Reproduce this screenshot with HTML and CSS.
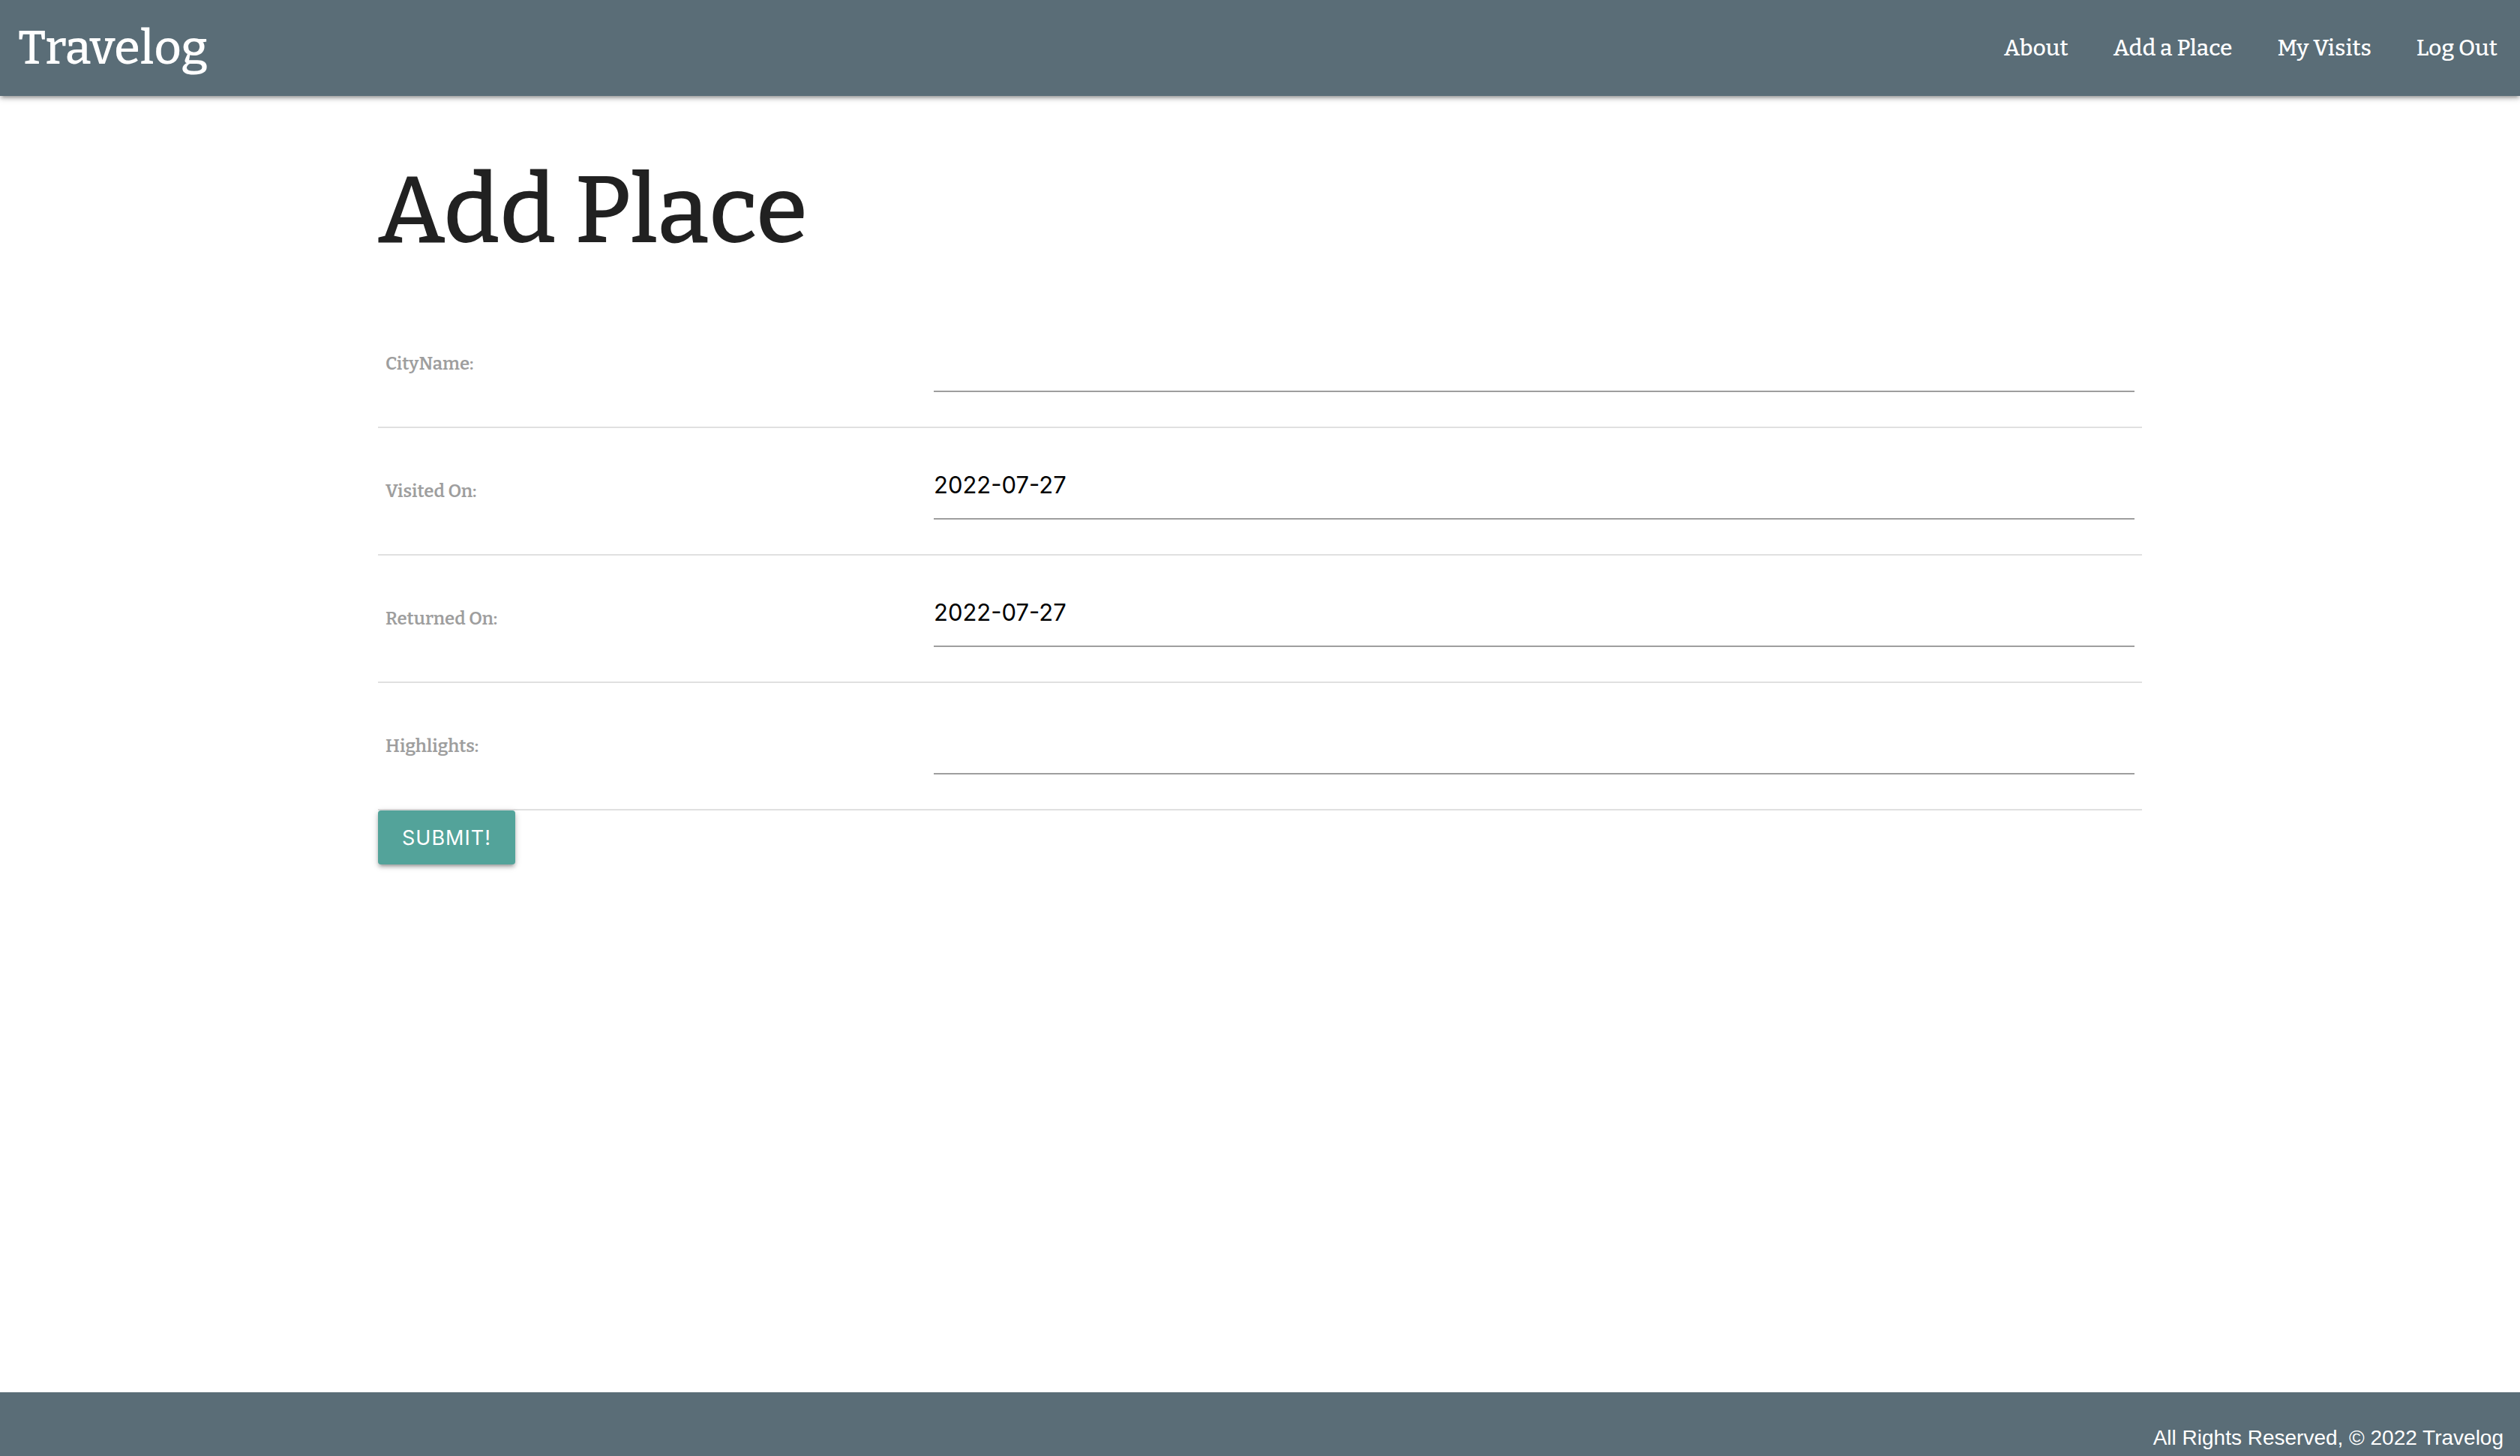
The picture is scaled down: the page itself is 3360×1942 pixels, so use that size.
FILE: index.html
```html
<!DOCTYPE html>
<html lang="en">
<head>
  <meta charset="utf-8">
  <meta name="viewport" content="width=device-width, initial-scale=1">
  <title>Travelog</title>
  <link rel="stylesheet" href="styles.css">
</head>
<body>
  <header class="site-header">
    <a class="brand" href="/">Travelog</a>
    <nav class="site-nav">
      <a href="/about">About</a>
      <a href="/places/new">Add a Place</a>
      <a href="/visits">My Visits</a>
      <a href="/logout">Log Out</a>
    </nav>
  </header>
  <main class="container">
    <h1>Add Place</h1>
    <form>
      <table class="form-table">
        <tbody>
          <tr>
            <th scope="row"><label for="city">CityName:</label></th>
            <td><input id="city" name="name" type="text"></td>
          </tr>
          <tr>
            <th scope="row"><label for="visited">Visited On:</label></th>
            <td><input id="visited" name="visited" type="text" value="2022-07-27"></td>
          </tr>
          <tr>
            <th scope="row"><label for="returned">Returned On:</label></th>
            <td><input id="returned" name="returned" type="text" value="2022-07-27"></td>
          </tr>
          <tr>
            <th scope="row"><label for="highlights">Highlights:</label></th>
            <td><input id="highlights" name="highlights" type="text"></td>
          </tr>
        </tbody>
      </table>
      <button class="btn" type="submit">Submit!</button>
    </form>
  </main>
  <footer class="site-footer">All Rights Reserved, © 2022 Travelog</footer>
</body>
</html>
```

FILE: styles.css
```css
:root {
  --slate: #5a6d77;
  --teal: #53a39a;
  --slab: Bitter, "DejaVu Serif Condensed", "DejaVu Serif", serif;
  --sans: Inter, "Liberation Sans", sans-serif;
  --shadow: 0 4px 4px 0 rgba(0, 0, 0, .14), 0 6px 2px -4px rgba(0, 0, 0, .12), 0 2px 10px 0 rgba(0, 0, 0, .2);
}

* {
  box-sizing: border-box;
}

body {
  display: flex;
  flex-direction: column;
  min-height: 100vh;
  margin: 0;
  color: #212121;
  font-family: var(--slab);
}

.site-header {
  display: flex;
  align-items: center;
  justify-content: space-between;
  min-height: 128px;
  padding-left: 24px;
  background: var(--slate);
  box-shadow: var(--shadow);
}

.site-header a {
  color: #fff;
  font-weight: 500;
  text-decoration: none;
}

.brand {
  font-size: 63px;
}

.site-nav {
  display: flex;
}

.site-nav a {
  padding: 0 30px;
  font-size: 30px;
}

.container {
  flex: 1;
  width: 70%;
  margin: 0 auto;
}

h1 {
  margin: 78px 0 46px;
  font-size: 126px;
  font-weight: 500;
  line-height: 149px;
}

.form-table {
  width: 100%;
  border-collapse: separate;
  border-spacing: 0;
}

.form-table th,
.form-table td {
  padding: 30px 10px;
  border-bottom: 2px solid #e0e0e0;
  text-align: left;
}

.form-table td {
  padding-bottom: 46px;
}

.form-table th {
  width: 31.08%;
  color: #9e9e9e;
  font-size: 24px;
  font-weight: 600;
}

.form-table input {
  display: block;
  width: 100%;
  height: 92px;
  margin: 0;
  padding: 0;
  border: 0;
  border-bottom: 2px solid #9e9e9e;
  outline: 0;
  background: transparent;
  color: #000;
  font: 31px var(--sans);
}

.btn {
  display: block;
  height: 72px;
  padding: 0 32px;
  border: 0;
  border-radius: 4px;
  background: var(--teal);
  box-shadow: var(--shadow);
  color: #fff;
  font: 27px var(--sans);
  letter-spacing: 1px;
  text-transform: uppercase;
}

.site-footer {
  padding: 44px 22px 8px;
  background: var(--slate);
  color: #fff;
  font: 28px/33px "Liberation Sans", sans-serif;
  text-align: right;
}
```
